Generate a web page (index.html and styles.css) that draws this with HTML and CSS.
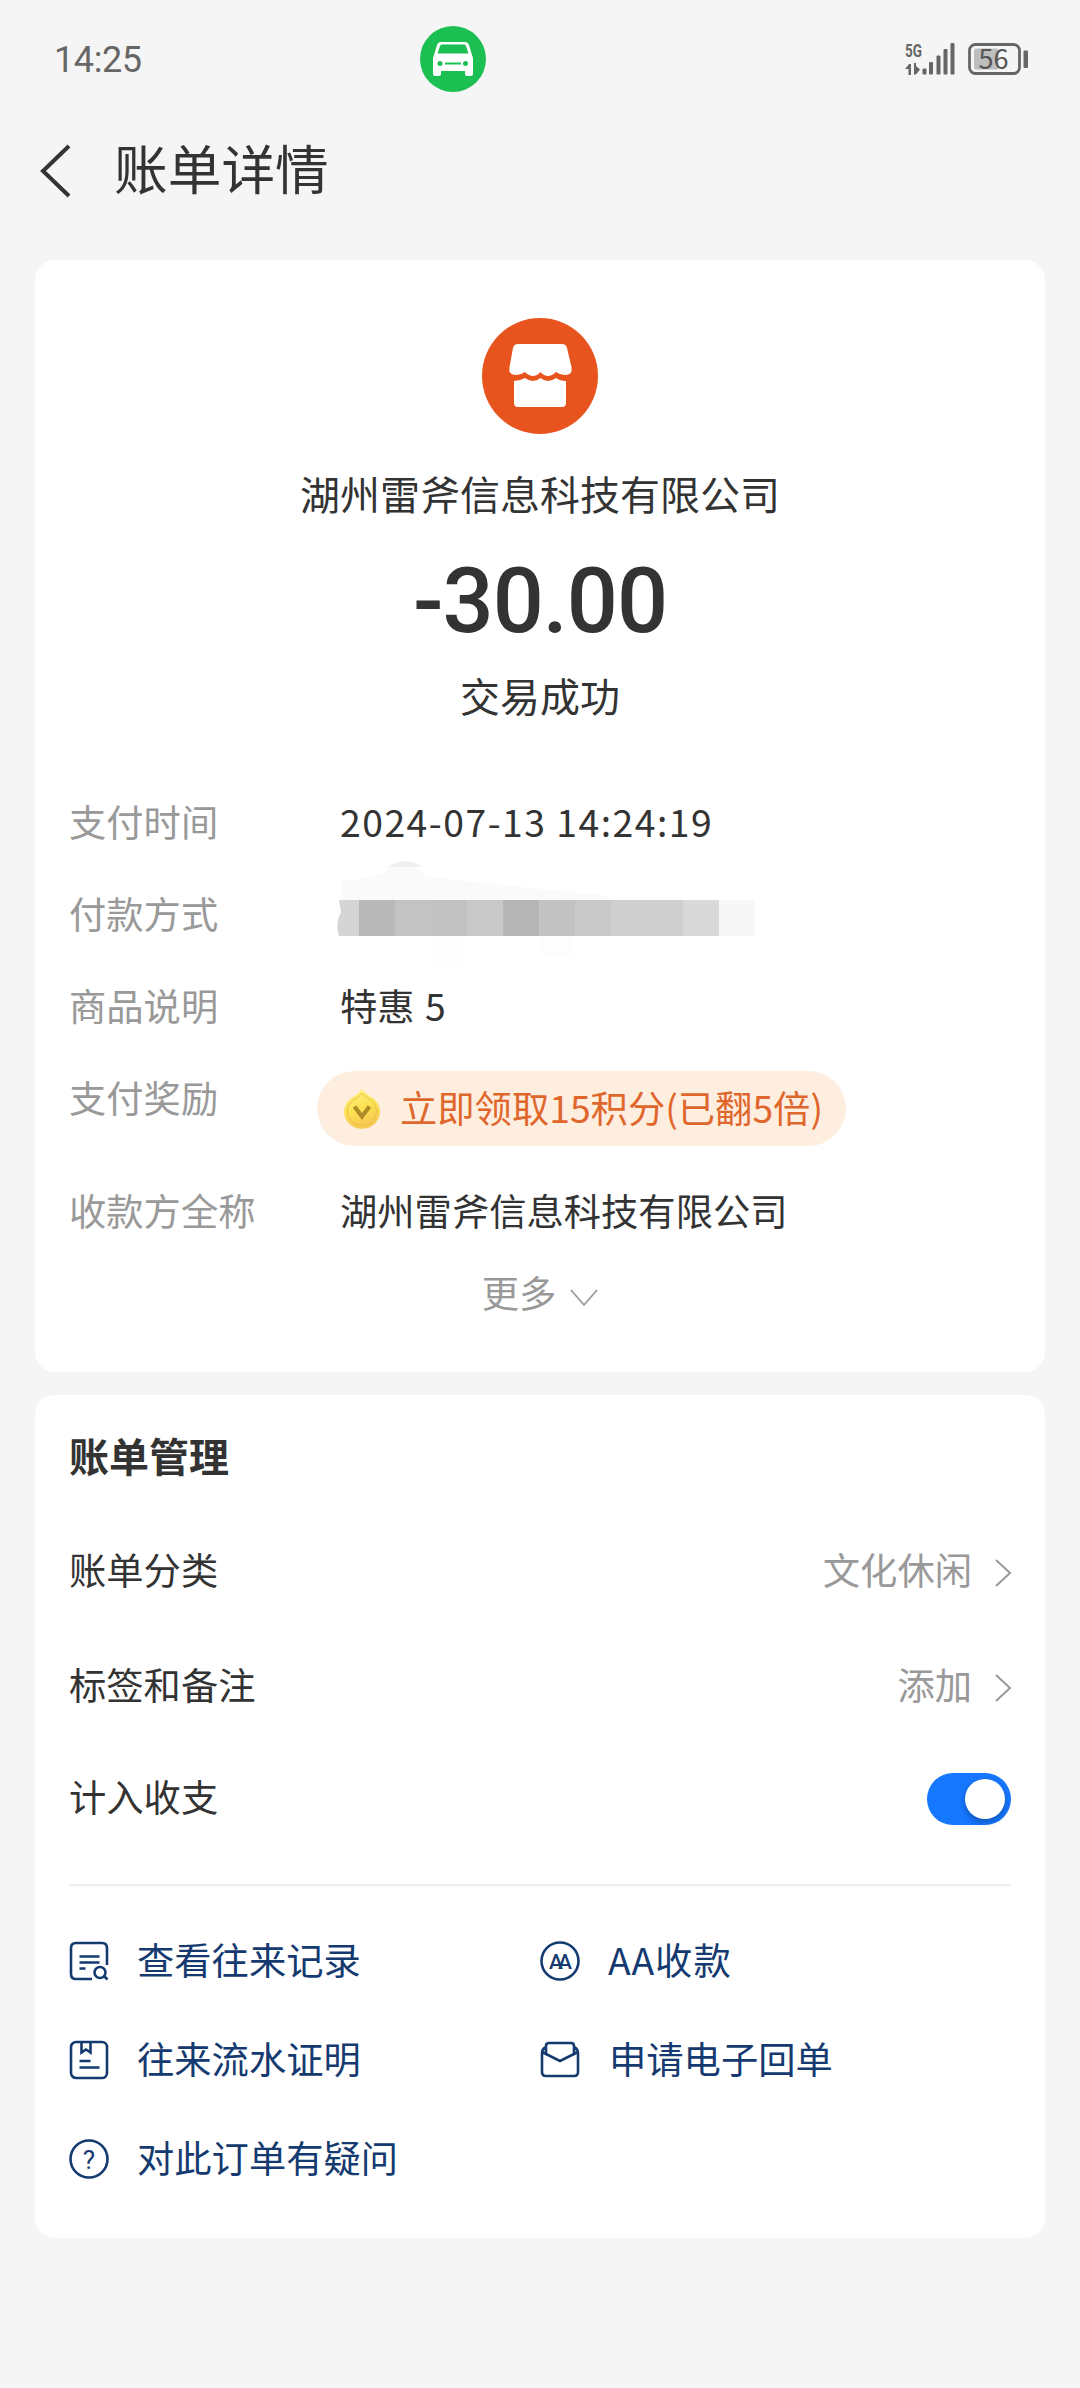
FILE: index.html
```html
<!DOCTYPE html>
<html lang="zh-CN">
<head>
<meta charset="utf-8">
<title>账单详情</title>
<link rel="stylesheet" href="styles.css">
</head>
<body>
<header class="status">
  <span class="clock">14:25</span>
  <svg class="car" viewBox="0 0 66 66" width="66" height="66">
    <circle cx="33" cy="33" r="33" fill="#1cc052"/>
    <path fill="#fff" fill-rule="evenodd" d="M21 16h24q3 0 4 3l3 10q1 2 1 4v15q0 2-2 2h-4q-2 0-2-2v-3H21v3q0 2-2 2h-4q-2 0-2-2V33q0-2 1-4l3-10q1-3 4-3zM22 18.500q-1.500 0-2 1.500l-2.500 7.500h31L46 20q-.5-1.500-2-1.500zM20 35a2.500 2.500 0 1 0 0 5 2.500 2.500 0 0 0 0-5zM25 36.500v2h16v-2zM45.500 35a2.500 2.500 0 1 0 0 5 2.500 2.500 0 0 0 0-5z"/>
  </svg>
  <div class="indicators">
    <svg class="signal" viewBox="0 0 52 32" width="52" height="32" fill="#666">
      <text x="0" y="14" class="net" textLength="17" lengthAdjust="spacingAndGlyphs">5G</text>
      <path d="M0 26l4-5h2v11H3.500v-6zM9 20h2v3l4 3.500-4 5H9z"/>
      <rect x="17.500" y="25.500" width="4" height="6" rx="1"/>
      <rect x="24" y="19" width="4" height="12.500" rx="1"/>
      <rect x="31.500" y="12.500" width="4" height="19" rx="1"/>
      <rect x="38.500" y="6" width="4" height="25.500" rx="1"/>
      <rect x="45.500" y="0" width="4" height="31.500" rx="1"/>
    </svg>
    <svg class="battery" viewBox="0 0 60 32" width="60" height="32">
      <rect x="6" y="5.500" width="24.500" height="21" rx="2" fill="#bdbdbd"/>
      <rect x="1.500" y="1.500" width="50" height="29" rx="6" fill="none" stroke="#666" stroke-width="2.800"/>
      <rect x="55.500" y="7.500" width="4.500" height="17.500" rx="1" fill="#666"/>
      <text x="10.500" y="25.500" class="level" textLength="30">56</text>
    </svg>
  </div>
</header>

<nav class="titlebar">
  <svg viewBox="0 0 32 52" width="32" height="52"><path d="M29 1L3 26l26 25" fill="none" stroke="#333" stroke-width="4"/></svg>
  <h1>账单详情</h1>
</nav>

<main>
  <section class="card bill">
    <svg class="shop" viewBox="0 0 116 116" width="116" height="116">
      <circle cx="58" cy="58" r="58" fill="#e8541e"/>
      <path fill="#fff" d="M36 26h44q4 0 5 4l4.500 19q1.500 8-6.500 8-5 0-9-3-4 4-8 4t-7.500-4q-3.500 4-7.500 4t-8-4q-4 3-9 3-8 0-6.500-8L31 30q1-4 5-4z"/>
      <path fill="#fff" d="M32 63q6 0 11-3 4 3 8 3t7.500-3q3.500 3 7.500 3t8-3q4 3 10 3v22q0 4-4 4H36q-4 0-4-4z"/>
    </svg>
    <div class="payee">湖州雷斧信息科技有限公司</div>
    <div class="amount">-30.00</div>
    <div class="state">交易成功</div>

    <dl class="details">
      <div class="row"><dt>支付时间</dt><dd class="time">2024-07-13 14:24:19</dd></div>
      <div class="row"><dt>付款方式</dt><dd>
        <svg class="masked" viewBox="0 0 420 106" width="420" height="106">
          <path d="M4 39L6 20q24-1 40-8 20-20 44 4l180 19v4z" fill="#fafafa"/>
          <path d="M51 6q17-12 34 0z" fill="#f0f0f0"/>
          <path d="M94 75h32v33H94zM204 75h32v20h-32z" fill="#fdfdfd"/>
          <path d="M2 39h20v36H2q-4-13 2-24z" fill="#d5d5d5"/>
          <rect x="22" y="39" width="36" height="36" fill="#b9b9b9"/>
          <rect x="58" y="39" width="36" height="36" fill="#c3c3c3"/>
          <rect x="94" y="39" width="36" height="36" fill="#c1c1c1"/>
          <rect x="130" y="39" width="36" height="36" fill="#c9c9c9"/>
          <rect x="166" y="39" width="36" height="36" fill="#b6b6b6"/>
          <rect x="202" y="39" width="36" height="36" fill="#c2c2c2"/>
          <rect x="238" y="39" width="36" height="36" fill="#c9c9c9"/>
          <rect x="274" y="39" width="72" height="36" fill="#cfcfcf"/>
          <rect x="346" y="39" width="36" height="36" fill="#d9d9d9"/>
          <rect x="382" y="39" width="36" height="36" fill="#f7f7f7"/>
        </svg>
      </dd></div>
      <div class="row"><dt>商品说明</dt><dd class="goods">特惠 5</dd></div>
      <div class="row reward"><dt>支付奖励</dt><dd>
        <span class="pill">
          <svg viewBox="0 0 38 42" width="38" height="42">
            <defs><linearGradient id="gold" x1="0" y1="0" x2="0.300" y2="1"><stop offset="0" stop-color="#fdf28e"/><stop offset=".55" stop-color="#fde353"/><stop offset="1" stop-color="#f6c950"/></linearGradient></defs>
            <path d="M19 1q3 4 9 8a18 17 0 1 1-18 0q6-4 9-8z" fill="url(#gold)"/>
            <path d="M19 5q3 4 7 6a14.500 14 0 1 1-14 0q4-2 7-6z" fill="none" stroke="#e8bf45" stroke-width="1"/>
            <path d="M11.500 18.500l7.500 10 7.500-10" fill="none" stroke="#b08c28" stroke-width="4.200"/>
          </svg>
          <span class="claim">立即领取15积分(已翻5倍)</span>
        </span>
      </dd></div>
      <div class="row"><dt>收款方全称</dt><dd>湖州雷斧信息科技有限公司</dd></div>
    </dl>
    <div class="more">更多<svg viewBox="0 0 28 18" width="28" height="18"><path d="M1 1l13 15L27 1" fill="none" stroke="#999" stroke-width="1.800"/></svg></div>
  </section>

  <section class="card manage">
    <h2>账单管理</h2>
    <div class="item"><span>账单分类</span><span class="value">文化休闲<svg viewBox="0 0 16 28" width="16" height="28"><path d="M1 1l14 13L1 27" fill="none" stroke="#999" stroke-width="2"/></svg></span></div>
    <div class="item"><span>标签和备注</span><span class="value">添加<svg viewBox="0 0 16 28" width="16" height="28"><path d="M1 1l14 13L1 27" fill="none" stroke="#999" stroke-width="2"/></svg></span></div>
    <div class="item last"><span>计入收支</span><span class="switch"><i></i></span></div>
    <div class="links">
      <a><svg viewBox="0 0 40 40" width="40" height="40" class="line"><path d="M38 24V7q0-5-5-5H7Q2 2 2 7v26q0 5 5 5h16M10.500 15.500h20M10.500 21.500h20M10.500 27.500h6M35 35l3.500 3.500"/><circle cx="31" cy="31.500" r="5.500"/></svg>查看往来记录</a>
      <a class="split"><svg viewBox="0 0 40 40" width="40" height="40" class="line"><circle cx="20" cy="20" r="18.500"/><text x="9 18" y="27.500" class="glyph">AA</text></svg>AA收款</a>
      <a><svg viewBox="0 0 40 40" width="40" height="40" class="line"><rect x="2" y="2" width="36" height="36" rx="5"/><path d="M12.500 2v10.500l4.500-3 4.500 3V2M10.500 21h11M10.500 27.500h20"/></svg>往来流水证明</a>
      <a class="envelope"><svg viewBox="0 0 40 40" width="40" height="40" class="line"><path d="M6 7q-4 2-4 6v19q0 4 4 4h28q4 0 4-4V13q0-4-4-6M6 14V6q0-3 3-3h22q3 0 3 3v8M2 12l18 9 18-9"/></svg>申请电子回单</a>
      <a><svg viewBox="0 0 40 40" width="40" height="40" class="line"><circle cx="20" cy="20" r="18.500"/><text x="20" y="29.500" class="glyph help">?</text></svg>对此订单有疑问</a>
    </div>
  </section>
</main>
</body>
</html>
```

FILE: styles.css
```css
* { box-sizing: border-box; }

body {
  margin: 0;
  background: #f5f5f5;
  color: #333;
  font-family: "Noto Sans CJK SC", sans-serif;
  font-size: 37.3px;
  line-height: 56px;
}

svg { display: block; flex: none; overflow: visible; }

.status {
  display: grid;
  grid-template-columns: 366px 1fr auto;
  align-items: center;
  height: 118px;
  padding: 0 52px 0 54px;
}
.clock { padding-top: 2px; font-family: Roboto, sans-serif; font-size: 36px; letter-spacing: -.4px; color: #666; }
.indicators { display: flex; gap: 11px; }
.net { font: 700 19px Roboto, sans-serif; }
.level { font: 400 27px "Noto Sans CJK SC", sans-serif; fill: #555; }

.titlebar {
  display: flex;
  align-items: center;
  gap: 42px;
  height: 106px;
  padding-left: 40px;
}
.titlebar h1 { margin: -9px 0 0; font-size: 53.700px; font-weight: 400; line-height: 80px; }

main {
  display: flex;
  flex-direction: column;
  gap: 23px;
  padding: 36px 35px 0;
}
.card { background: #fff; border-radius: 20px; padding: 0 34px; }

.bill {
  display: flex;
  flex-direction: column;
  align-items: center;
  height: 1112px;
  padding-top: 58px;
}
.payee { margin-top: 29px; font-size: 40px; line-height: 60px; }
.amount { margin-top: 24px; font: 500 90px/110px Roboto, sans-serif; letter-spacing: -1px; }
.state { margin-top: 8px; font-size: 40px; line-height: 60px; }

.details { align-self: stretch; margin: 68px 0 0; }
.row {
  display: grid;
  grid-template-columns: 271px 1fr;
  height: 56px;
  margin-bottom: 36px;
}
.row dt { color: #999; }
.row dd { margin: 0; }
.time { letter-spacing: 1.500px; }
.goods { word-spacing: 2px; }
.masked { margin: -24px 0 0 -3px; }
.reward { height: 77px; }
.reward dd { margin: 2px 0 0 -23px; }
.pill {
  display: inline-flex;
  align-items: center;
  gap: 19px;
  width: 529px;
  height: 75px;
  padding-left: 26px;
  border-radius: 38px;
  background: #feeee0;
  color: #e0672c;
}
.claim { margin-top: -4px; white-space: nowrap; }
.more { display: flex; align-items: center; gap: 14px; margin-top: -10px; color: #999; }
.more svg { margin-top: 12px; }

.manage { height: 843px; padding-top: 30px; }
.manage h2 { margin: 0 0 56px; font-size: 40px; line-height: 60px; }
.item {
  display: flex;
  justify-content: space-between;
  align-items: center;
  height: 56px;
  margin-bottom: 59px;
}
.value { display: flex; align-items: center; gap: 23px; color: #999; }
.value svg { margin-top: 7px; }
.item.last { margin: -3px 0 60px; }
.switch {
  display: flex;
  justify-content: flex-end;
  width: 84px;
  height: 52px;
  margin-top: 6px;
  padding: 6px;
  border-radius: 26px;
  background: #1677ff;
}
.switch i { width: 40px; height: 40px; border-radius: 50%; background: #fff; box-shadow: 0 3px 6px rgba(0, 0, 0, .3); }

.links {
  display: grid;
  grid-template-columns: 471px 1fr;
  row-gap: 43px;
  padding-top: 45px;
  border-top: 2px solid #eee;
}
.links a { display: flex; align-items: center; gap: 28px; height: 56px; color: #153a70; }
.links .split { letter-spacing: 1px; }
.links .envelope { gap: 29px; }
.line { margin-top: 3px; fill: none; stroke: #153a70; stroke-width: 2.600; }
.glyph { fill: #153a70; stroke: none; font-family: Roboto, sans-serif; font-size: 21px; font-weight: 500; letter-spacing: 0; }
.help { font-size: 26px; font-weight: 400; text-anchor: middle; }
```
